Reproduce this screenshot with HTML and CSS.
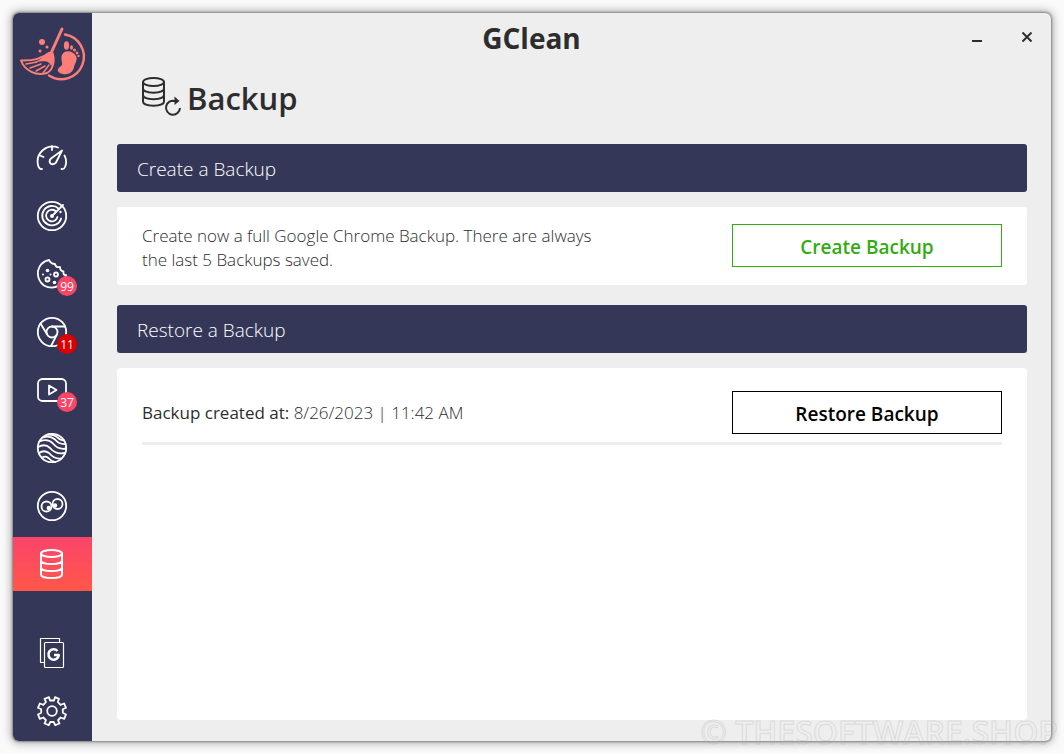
FILE: index.html
```html
<!DOCTYPE html>
<html lang="en">
<head>
<meta charset="utf-8">
<title>GClean</title>
<link rel="stylesheet" href="styles.css">
</head>
<body>
<div class="window">
  <nav class="sidebar" aria-label="Main">
    <svg class="logo" viewBox="0 0 70 60" aria-hidden="true">
      <g fill="none" stroke="#fd7d78" stroke-linecap="round" stroke-linejoin="round">
        <path d="M43 4 33 26" stroke-width="3"/>
        <path d="M46 9.500A22.500 22.500 0 1 1 30 50.500" stroke-width="2.500"/>
        <path d="M30 28C22 34 13 36 2 35.500C6 46 17 51 28 48C35 44 36 34 33 27" stroke-width="2"/>
        <path d="M7 39 18 37M11 43 22 39M17 46 26 41M24 48 30 40" stroke-width="1.500"/>
      </g>
      <g fill="#fd7d78">
        <path d="M33 26C26 27 25 34 15 37C24 37 29 34 32 41C35 37 36 31 33 26Z"/>
        <circle cx="23" cy="17" r="3"/><circle cx="28" cy="22" r="1.500"/><circle cx="21" cy="26" r="1.500"/>
        <path d="M43 30C46 24 54 26 57 31C59 35 56 38 55 42C54 47 50 50 44 49C38 48 37 44 42 41C45 39 41 35 43 30Z"/>
        <ellipse cx="47.500" cy="20.500" rx="2.600" ry="4.300"/>
        <ellipse cx="52.500" cy="22.500" rx="1.500" ry="2.200"/><circle cx="55.500" cy="25" r="1.500"/><circle cx="58" cy="28" r="1.400"/><circle cx="59.500" cy="31" r="1.200"/>
      </g>
    </svg>
    <ul class="nav-list">
      <li><a class="nav-item" href="#dashboard" aria-label="Dashboard">
        <svg class="icon" viewBox="0 0 32 32" aria-hidden="true"><path d="M6 27Q3 27.500 2 23Q0 14 7 8Q14 2.500 22 5.500M28.500 13.500Q31.500 19 29 25Q28 27.500 25.500 27M16 4V8M4 13.500 7.500 15M26 8.500 20 20.500Q17 23.500 14.500 21.500Q12.500 19 15 16.500Z"/></svg>
      </a></li>
      <li><a class="nav-item" href="#scan" aria-label="Scan">
        <svg class="icon" viewBox="0 0 32 32" aria-hidden="true"><circle cx="16" cy="16" r="14.200"/><path d="M22.500 8.500A9.700 9.700 0 1 0 25.200 18.500M19.500 11A5.800 5.800 0 1 0 21.500 17M16 16 27 5"/><circle class="dot" cx="16" cy="16" r="2"/><circle class="dot" cx="24.500" cy="12" r="1.200"/></svg>
      </a></li>
      <li><a class="nav-item" href="#cookies" aria-label="Cookies">
        <svg class="icon" viewBox="0 0 32 32" aria-hidden="true"><path d="M13 2Q4 4 2 13Q1 22 8 27.500Q16 32 24 27Q30 23 30 17Q27 17.500 27.500 13.500Q24 13 24 9Q20 10 19 6Q15 6 13 2Z"/><circle cx="11.500" cy="21.500" r="2"/><circle cx="20" cy="16.500" r="2"/><g class="dot"><circle cx="11.500" cy="12.500" r="1.800"/><circle cx="7" cy="16.500" r="1"/><circle cx="18.500" cy="24.500" r="1.800"/><circle cx="14.500" cy="16.500" r="1"/></g></svg>
        <span class="badge">99</span>
      </a></li>
      <li><a class="nav-item" href="#browser" aria-label="Browser">
        <svg class="icon" viewBox="0 0 32 32" aria-hidden="true"><circle cx="16" cy="16" r="14.200"/><circle cx="16" cy="16" r="5.500"/><path d="M16 10.500H29M11.200 18.500 4.500 7.500M20.800 18.800 15 30"/></svg>
        <span class="badge badge-alert">11</span>
      </a></li>
      <li><a class="nav-item" href="#video" aria-label="Video">
        <svg class="icon" viewBox="0 0 32 32" aria-hidden="true"><rect x="2" y="5" width="28" height="22" rx="4.500"/><path d="M13 11.500V20.500L20.500 16Z"/></svg>
        <span class="badge">37</span>
      </a></li>
      <li><a class="nav-item" href="#earth" aria-label="Earth">
        <svg class="icon" viewBox="0 0 32 32" aria-hidden="true"><circle cx="16" cy="16" r="14.200"/><path d="M7 5.500Q14 3 19 7.500Q23 12.500 29.500 12M3.500 9.500Q12 6 17 11.500Q22 18 30 16.500M2 15Q9 11 14 16Q20 23 29 21M3 21Q8 17.500 13 21Q18 27 25 26.500M12 2.500Q19 2.500 22 6Q24 8 28 8.500M6 25.500Q10 23.500 13 26.500Q15 29 19 30"/></svg>
      </a></li>
      <li><a class="nav-item" href="#privacy" aria-label="Privacy">
        <svg class="icon" viewBox="0 0 32 32" aria-hidden="true"><circle cx="16" cy="16" r="14.200"/><circle cx="10.500" cy="16.500" r="5"/><circle cx="21.500" cy="14" r="5"/><g class="dot"><circle cx="12.800" cy="18" r="2.200"/><circle cx="19" cy="15.500" r="2.200"/></g></svg>
      </a></li>
      <li><a class="nav-item nav-item-active" href="#backup" aria-label="Backup" aria-current="page">
        <svg class="icon icon-bold" viewBox="0 0 32 32" aria-hidden="true"><ellipse cx="15.500" cy="5.500" rx="10.500" ry="3.500"/><path d="M5 5.500V26.500C5 31.200 26 31.200 26 26.500V5.500M5 12.500C5 17.200 26 17.200 26 12.500M5 19.500C5 24.200 26 24.200 26 19.500"/></svg>
      </a></li>
    </ul>
    <ul class="nav-list nav-list-end">
      <li><a class="nav-item" href="#news" aria-label="Google programs">
        <svg class="icon icon-thin" viewBox="0 0 32 32" aria-hidden="true"><path d="M7.500 25.500H4.500V1.500H23.500V4.500"/><rect x="8.500" y="5.500" width="19" height="25" rx="1"/><path class="heavy" d="M21.500 14A5.200 5.200 0 1 0 22.800 18H18"/></svg>
      </a></li>
      <li><a class="nav-item" href="#settings" aria-label="Settings">
        <svg class="icon" viewBox="0 0 32 32" aria-hidden="true"><circle cx="16" cy="16" r="4.800"/><path d="M13 2.200 14 5.500H18L19 2.200 23 3.800 21.800 7 24.500 9.800 28.200 8.500 30 12.800 26.800 14.300V17.700L30 19.500 28.200 23.800 24.700 22.500 22 25.200 23.500 28.500 19.200 30.200 17.700 27H14.300L12.800 30.200 8.500 28.500 10 25.200 7.300 22.500 3.800 23.800 2 19.500 5.200 17.700V14.300L2 12.800 3.800 8.500 7.300 9.800 10 7 8.500 3.800Z"/></svg>
      </a></li>
    </ul>
  </nav>

  <div class="main">
    <header class="titlebar">
      <div class="app-name">GClean</div>
      <div class="window-controls">
        <button class="control" type="button" aria-label="Minimize"><svg class="control-icon" viewBox="0 0 12 12" aria-hidden="true"><path d="M1 9H11"/></svg></button>
        <button class="control" type="button" aria-label="Close"><svg class="control-icon" viewBox="0 0 12 12" aria-hidden="true"><path d="M1.500 .5 10.500 9.500M10.500 .5 1.500 9.500"/></svg></button>
      </div>
    </header>

    <main class="content">
      <h1 class="page-title">
        <svg class="title-icon" viewBox="0 0 42 42" aria-hidden="true"><g fill="none" stroke="#2d2d2d" stroke-width="2"><ellipse cx="12.500" cy="5" rx="10.500" ry="4"/><path d="M2 5V24.500C2 30 23 30 23 24.500V5M2 11.500C2 17 23 17 23 11.500M2 18C2 23.500 23 23.500 23 18"/><path d="M34 24A7 7 0 1 0 39 31M30.500 24H36"/></g><path fill="#2d2d2d" d="M33.500 19.500 38.500 24 33.500 28Z"/></svg>
        Backup
      </h1>

      <section class="section">
        <h2 class="bar">Create a Backup</h2>
        <div class="card row-card">
          <p class="description">Create now a full Google Chrome Backup. There are always the last 5 Backups saved.</p>
          <button class="action action-create" type="button">Create Backup</button>
        </div>
      </section>

      <section class="section section-fill">
        <h2 class="bar">Restore a Backup</h2>
        <div class="card list-card">
          <ul class="backup-list">
            <li class="backup-row">
              <span class="backup-label">Backup created at: <time class="backup-date" datetime="2023-08-26T11:42">8/26/2023 | 11:42 AM</time></span>
              <button class="action" type="button">Restore Backup</button>
            </li>
          </ul>
        </div>
      </section>
    </main>
  </div>
</div>
<div class="watermark">© THESOFTWARE.SHOP</div>
</body>
</html>
```
FILE: styles.css
```css
* { box-sizing: border-box; }

body {
  margin: 0;
  height: 100vh;
  padding: 13px;
  overflow: hidden;
  background: #fafafa;
  color: #2d2d2d;
  font-family: "Open Sans", "Noto Sans", sans-serif;
}

ul { list-style: none; margin: 0; padding: 0; }
h1, h2, p { margin: 0; }

.window {
  display: flex;
  height: 100%;
  border-radius: 6px;
  background: #eee;
  overflow: hidden;
  box-shadow: 0 0 2px 1px #888, 0 0 9px 2px #aaa;
}

.sidebar {
  flex: none;
  display: flex;
  flex-direction: column;
  width: 79px;
  padding-bottom: 3px;
  background: #343758;
}

.logo { display: block; width: 70px; height: 60px; margin: 12px 0 46px 6px; }

.nav-list { display: flex; flex-direction: column; gap: 4px; }
.nav-list-end { margin-top: auto; }

.nav-item {
  position: relative;
  display: flex;
  align-items: center;
  height: 54px;
  padding-left: 23px;
}

.nav-item-active { background: linear-gradient(#fb446c, #ff5849); }

.icon {
  width: 32px;
  height: 32px;
  fill: none;
  stroke: #fff;
  stroke-width: 1.8;
  stroke-linecap: round;
  stroke-linejoin: round;
}
.icon-bold { stroke-width: 2; }
.icon-thin { stroke-width: 1.2; }
.icon .dot { fill: #fff; stroke: none; }
.icon .heavy { stroke-width: 2.6; stroke-linecap: butt; }

.badge {
  position: absolute;
  left: 44px;
  top: 29px;
  width: 20px;
  height: 20px;
  border-radius: 50%;
  background: #fa4666;
  color: #fff;
  font-size: 12px;
  line-height: 21px;
  text-align: center;
}
.badge-alert { background: #dc0000; }

.main { flex: 1; display: flex; flex-direction: column; min-width: 0; }

.titlebar {
  display: grid;
  grid-template-columns: 80px 1fr 160px;
  align-items: center;
  height: 50px;
}

.app-name {
  grid-column: 2;
  text-align: center;
  font-size: 28px;
  font-weight: 700;
}
.window-controls {
  display: flex;
  gap: 20px;
  justify-content: flex-end;
  padding-right: 9px;
}
.control {
  display: flex;
  align-items: center;
  justify-content: center;
  width: 30px;
  height: 30px;
  padding: 0;
  border: 0;
  background: none;
}
.control-icon { width: 12px; height: 12px; fill: none; stroke: #2d2d2d; stroke-width: 2; }

.content {
  flex: 1;
  display: flex;
  flex-direction: column;
  gap: 20px;
  padding: 4px 24px 21px 25px;
}

.page-title {
  display: flex;
  align-items: center;
  gap: 4px;
  height: 57px;
  padding-top: 4px;
  padding-left: 24px;
  font-size: 31px;
  font-weight: 600;
}
.title-icon { width: 42px; height: 42px; }

.section { display: flex; flex-direction: column; gap: 15px; }
.section-fill { flex: 1; }

.bar {
  height: 48px;
  padding: 0 20px;
  border-radius: 3px;
  background: #343758;
  color: #fff;
  font-size: 19px;
  font-weight: 300;
  line-height: 50px;
}

.card { border-radius: 3px; background: #fff; padding: 0 25px; }
.row-card { display: flex; align-items: flex-start; justify-content: space-between; height: 78px; padding-top: 17px; }
.list-card { flex: 1; padding-top: 23px; }

.description { width: 460px; font-size: 17px; font-weight: 300; line-height: 24px; }

.action {
  width: 270px;
  height: 43px;
  padding: 2px 0 0;
  border: 1px solid #000;
  background: #fff;
  color: #000;
  font: 600 19px "Open Sans", "Noto Sans", sans-serif;
}
.action-create { border-color: #32ac10; color: #32ac10; }

.backup-row {
  display: flex;
  align-items: center;
  justify-content: space-between;
  padding-bottom: 8px;
  border-bottom: 3px solid #eee;
}
.backup-label { font-size: 17px; }
.backup-date { font-weight: 300; }

.watermark {
  position: absolute;
  right: 6px;
  bottom: 6px;
  color: transparent;
  font-size: 32px;
  font-weight: 600;
  line-height: 32px;
  white-space: nowrap;
  -webkit-text-stroke: 1px rgba(170, 170, 170, .3);
  pointer-events: none;
}
```
